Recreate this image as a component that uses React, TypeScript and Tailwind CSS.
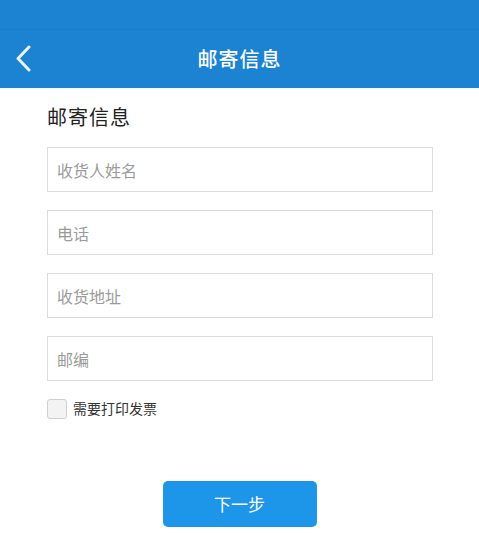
export default function App() {
  const fields = ["收货人姓名", "电话", "收货地址", "邮编"];

  return (
    <div
      className="w-[479px] h-[533px] bg-white overflow-hidden"
      style={{ fontFamily: '"Noto Sans CJK SC", "Noto Sans", sans-serif' }}
    >
      <div className="bg-[#1c82d2]">
        <div className="h-[30px] border-b border-[#1a7cc9]" />
        <div className="relative h-[58px] flex items-center justify-center">
          <button className="absolute left-[13px] top-[14px] w-[20px] h-[28px] flex items-center justify-center">
            <svg width="18" height="27" viewBox="0 0 18 27" fill="none">
              <path d="M15 2 L4 13.5 L15 25" stroke="#eaf4ff" strokeWidth="3" strokeLinecap="round" strokeLinejoin="round" />
            </svg>
          </button>
          <span className="text-[20px] font-medium text-white tracking-[1px]">邮寄信息</span>
        </div>
      </div>

      <div className="pl-[47px] pt-[15px]">
        <h2 className="text-[20px] leading-[28px] text-[#222] tracking-[1px]">邮寄信息</h2>

        <div className="mt-[16px] flex flex-col gap-[18px]">
          {fields.map((f) => (
            <div
              key={f}
              className="w-[386px] h-[45px] border border-[#dcdcdc] flex items-center pl-[9px] text-[16px] text-[#9a9a9a]"
            >
              {f}
            </div>
          ))}
        </div>

        <label className="mt-[17px] flex items-center gap-[6px]">
          <span className="w-[20px] h-[20px] rounded-[3px] border border-[#cfcfcf] bg-[#f3f3f3]" />
          <span className="text-[14px] text-[#333]">需要打印发票</span>
        </label>
      </div>

      <div className="mt-[62px] flex justify-center">
        <button className="ml-[0px] w-[154px] h-[46px] rounded-[5px] bg-[#1d96ea] text-white text-[17px]">
          下一步
        </button>
      </div>
    </div>
  );
}
